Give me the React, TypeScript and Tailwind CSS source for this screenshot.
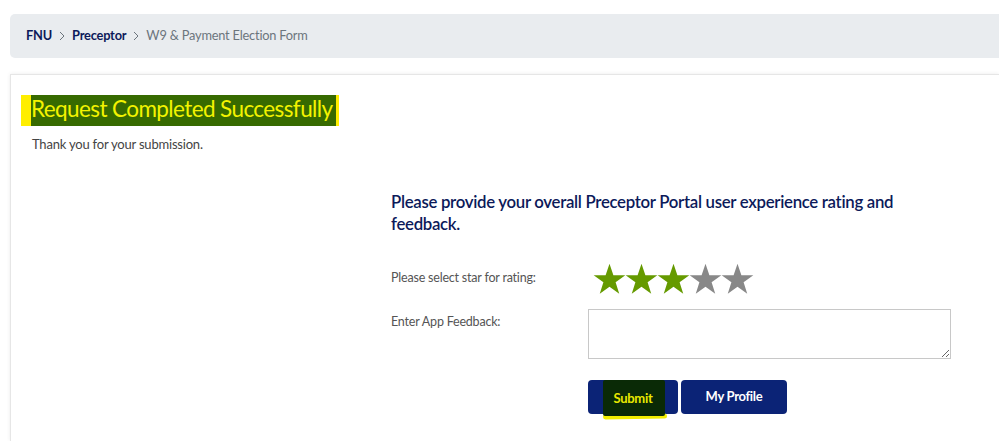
import React from "react";

function Star({ color }: { color: string }) {
  return (
    <svg width="33" height="32" viewBox="0 0 100 96" className="-mr-[1px]">
      <polygon
        points="50,2 61.8,36.5 98,36.5 68.5,58 79.5,93 50,71.5 20.5,93 31.5,58 2,36.5 38.2,36.5"
        fill={color}
      />
    </svg>
  );
}

function Chevron() {
  return (
    <svg width="8" height="10" viewBox="0 0 8 10" className="mx-[6px]">
      <path d="M2 1 L6 5 L2 9" fill="none" stroke="#6c757d" strokeWidth="1" />
    </svg>
  );
}

export default function App() {
  return (
    <div className="min-h-[441px] w-[999px] bg-white pt-[14px] font-['Lato','Open_Sans',sans-serif]">
      <div className="ml-[10px] flex h-[44px] items-center rounded-l-[5px] bg-[#e9ecef] pl-[16px] text-[12.8px] tracking-[-0.2px]">
        <span className="font-bold text-[#0c1a5a]">FNU</span>
        <Chevron />
        <span className="font-bold text-[#0c1a5a]">Preceptor</span>
        <Chevron />
        <span className="text-[#6c757d]">W9 &amp; Payment Election Form</span>
      </div>

      <div className="ml-[10px] mt-[16px] h-[367px] border-l border-t border-[#e6e6e6] shadow-[0_0_4px_rgba(0,0,0,0.08)]">
        <div className="ml-[10px] mt-[20px] flex h-[31px] w-[318px] items-stretch bg-[#ffee00]">
          <div className="ml-[10px] mr-[3px] flex flex-1 items-center overflow-hidden whitespace-nowrap bg-[#376a00] text-[22.5px] leading-none tracking-[-0.6px] text-[#f3f300]">
            <span className="-mt-[2px]">Request Completed Successfully</span>
          </div>
        </div>
        <div className="ml-[21px] mt-[9px] text-[13px] tracking-[-0.2px] text-[#444]">Thank you for your submission.</div>

        <div className="ml-[380px] mt-[36px] w-[600px]">
          <div className="w-[540px] text-[16.8px] font-semibold leading-[22px] tracking-[-0.3px] text-[#0c1a5a]">
            Please provide your overall Preceptor Portal user experience rating and feedback.
          </div>

          <div className="mt-[28px] flex items-center">
            <div className="w-[202px] shrink-0 text-[12.5px] tracking-[-0.2px] text-[#555]">Please select star for rating:</div>
            <div className="flex">
              <Star color="#659a00" />
              <Star color="#659a00" />
              <Star color="#659a00" />
              <Star color="#888888" />
              <Star color="#888888" />
            </div>
          </div>

          <div className="mt-[14px] flex items-start">
            <div className="mt-[4px] w-[197px] shrink-0 text-[12.5px] tracking-[-0.2px] text-[#555]">Enter App Feedback:</div>
            <textarea className="h-[50px] w-[363px] shrink-0 border border-[#c8c8c8] bg-white" />
          </div>

          <div className="ml-[197px] mt-[21px] flex gap-[3px]">
            <button className="relative flex h-[34px] w-[90px] items-center justify-center rounded-[4px] bg-[#0b2376]">
              <span className="relative">
                <span className="absolute -bottom-[10px] -left-[11px] h-[5px] w-[64px] -rotate-[1deg] rounded-full bg-[#f2ee00]" />
                <span className="absolute -bottom-[7px] -left-[11px] -top-[5px] w-[62px] rounded-[2px] bg-[#0a2a06]" />
                <span className="relative text-[13px] font-bold tracking-[-0.3px] text-[#e8e800]">Submit</span>
              </span>
            </button>
            <button className="flex h-[34px] w-[106px] items-center justify-center rounded-[4px] bg-[#0b2376] text-[13px] font-bold tracking-[-0.3px] text-white">
              My Profile
            </button>
          </div>
        </div>
      </div>
    </div>
  );
}
